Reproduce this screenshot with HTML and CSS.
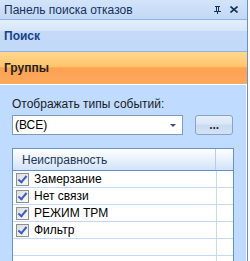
FILE: index.html
```html
<!DOCTYPE html>
<html lang="ru">
<head>
    <meta charset="UTF-8">
    <title>Панель поиска отказов</title>
    <link rel="stylesheet" href="styles.css">
</head>
<body>
    <div class="panel">
        <div class="titlebar">
            <span class="title">Панель поиска отказов</span>
            <span class="tools">
                <svg width="7" height="8" viewBox="0 0 7 8"><path d="M1 0h5v1H5v4h2v1H4v2H3V6H0V5h2V1H1z" fill="#15315e"/><rect x="3" y="1" width="1" height="4" fill="#c8dcf6"/></svg>
                <svg width="8" height="7" viewBox="0 0 8 7"><path d="M0.5 0.5l7 6M7.5 0.5l-7 6" stroke="#15315e" stroke-width="1.6"/></svg>
            </span>
        </div>
        <div class="section">Поиск</div>
        <div class="section active">Группы</div>
        <div class="content">
            <label class="caption">Отображать типы событий:</label>
            <div class="picker">
                <div class="combo">
                    <span>(ВСЕ)</span>
                    <span class="arrow"></span>
                </div>
                <button class="dots" type="button">...</button>
            </div>
            <div class="grid">
                <div class="grid-head">
                    <div class="cell">Неисправность</div>
                    <div class="cell rest"></div>
                </div>
                <div class="row"><div class="cell"><span class="check"></span>Замерзание</div><div class="cell rest"></div></div>
                <div class="row"><div class="cell"><span class="check"></span>Нет связи</div><div class="cell rest"></div></div>
                <div class="row"><div class="cell"><span class="check"></span>РЕЖИМ ТРМ</div><div class="cell rest"></div></div>
                <div class="row"><div class="cell"><span class="check"></span>Фильтр</div><div class="cell rest"></div></div>
                <div class="row"><div class="cell"></div><div class="cell rest"></div></div>
                <div class="row"><div class="cell"></div><div class="cell rest"></div></div>
            </div>
        </div>
    </div>
</body>
</html>
```

FILE: styles.css
```css
body {
    margin: 0;
    background: #ffffff;
    font-family: "Liberation Sans", Arial, sans-serif;
    font-size: 12px;
    overflow: hidden;
}
.panel {
    width: 247px;
    height: 261px;
    border-right: 1px solid #6591cd;
    background: #bfdbff;
    display: flex;
    flex-direction: column;
    overflow: hidden;
}
.titlebar {
    flex-shrink: 0;
    height: 19px;
    display: flex;
    align-items: center;
    justify-content: space-between;
    padding: 0 9px 0 4px;
    background: linear-gradient(#d3e4fa, #c2d8f5);
    border-bottom: 1px solid #8db2e3;
    color: #15315e;
}
.tools {
    display: flex;
    align-items: center;
    gap: 9px;
}
.tools svg {
    display: block;
}
.section {
    flex-shrink: 0;
    height: 31px;
    display: flex;
    align-items: center;
    padding-left: 4px;
    font-weight: bold;
    color: #15428b;
    background: linear-gradient(#e3eefd 0%, #d6e6fb 35%, #c4daf8 36%, #c2d9f8 100%);
    border-bottom: 1px solid #8db2e3;
}
.section.active {
    height: 32px;
    color: #222222;
    background: linear-gradient(#ffd88e 0%, #ffc56c 45%, #fea152 50%, #fdaa5e 100%);
    border-bottom: 1px solid #ffffff;
}
.content {
    flex: 1;
    min-height: 0;
    padding: 12px 13px 0 12px;
    border-right: 1px solid #ffffff;
    display: flex;
    flex-direction: column;
}
.caption {
    flex-shrink: 0;
    color: #1c1c1c;
    line-height: 14px;
}
.picker {
    flex-shrink: 0;
    display: flex;
    margin-top: 4px;
    gap: 12px;
}
.combo {
    width: 163px;
    height: 18px;
    border: 1px solid #7f9db9;
    background: #ffffff;
    display: flex;
    align-items: center;
    justify-content: space-between;
    padding: 0 6px 0 2px;
    color: #000000;
}
.arrow {
    width: 0;
    height: 0;
    border-left: 3px solid transparent;
    border-right: 3px solid transparent;
    border-top: 3px solid #3c4c78;
}
.dots {
    width: 38px;
    height: 20px;
    border: 1px solid #8ba2c1;
    border-radius: 3px;
    background: linear-gradient(#e6eefa 0%, #dbe7f7 45%, #c9dbf1 50%, #d3e2f6 100%);
    font-family: "Liberation Sans", Arial, sans-serif;
    font-size: 12px;
    font-weight: bold;
    line-height: 10px;
    color: #2a2a2a;
    padding: 0;
}
.grid {
    margin-top: 13px;
    width: 220px;
    flex: 1;
    min-height: 0;
    background: #ffffff;
    border: 1px solid #6591cd;
    border-bottom: none;
    overflow: hidden;
}
.grid-head {
    display: flex;
    height: 21px;
    background: linear-gradient(#ffffff, #d2e3f8);
    border-bottom: 1px solid #6591cd;
}
.grid-head .cell {
    width: 193px;
    border-right: 1px solid #b6cde9;
    padding-left: 9px;
    color: #1e395b;
}
.row {
    display: flex;
    height: 16px;
    border-bottom: 1px solid #c3d9f7;
}
.cell {
    flex-shrink: 0;
    display: flex;
    align-items: center;
    border-right: 1px solid #c3d9f7;
    color: #000000;
}
.row .cell {
    padding-left: 3px;
    width: 200px;
}
.cell.rest {
    flex: 1;
    border-right: none;
}
.check {
    flex-shrink: 0;
    width: 11px;
    height: 11px;
    border: 1px solid #8e8f8f;
    margin-right: 5px;
    background: linear-gradient(135deg, #dcdcdc, #fafafa);
    position: relative;
}
.check::after {
    content: "";
    position: absolute;
    left: 3px;
    top: 0px;
    width: 3px;
    height: 7px;
    border: solid #3b5fc1;
    border-width: 0 2px 2px 0;
    transform: rotate(40deg);
}
```
